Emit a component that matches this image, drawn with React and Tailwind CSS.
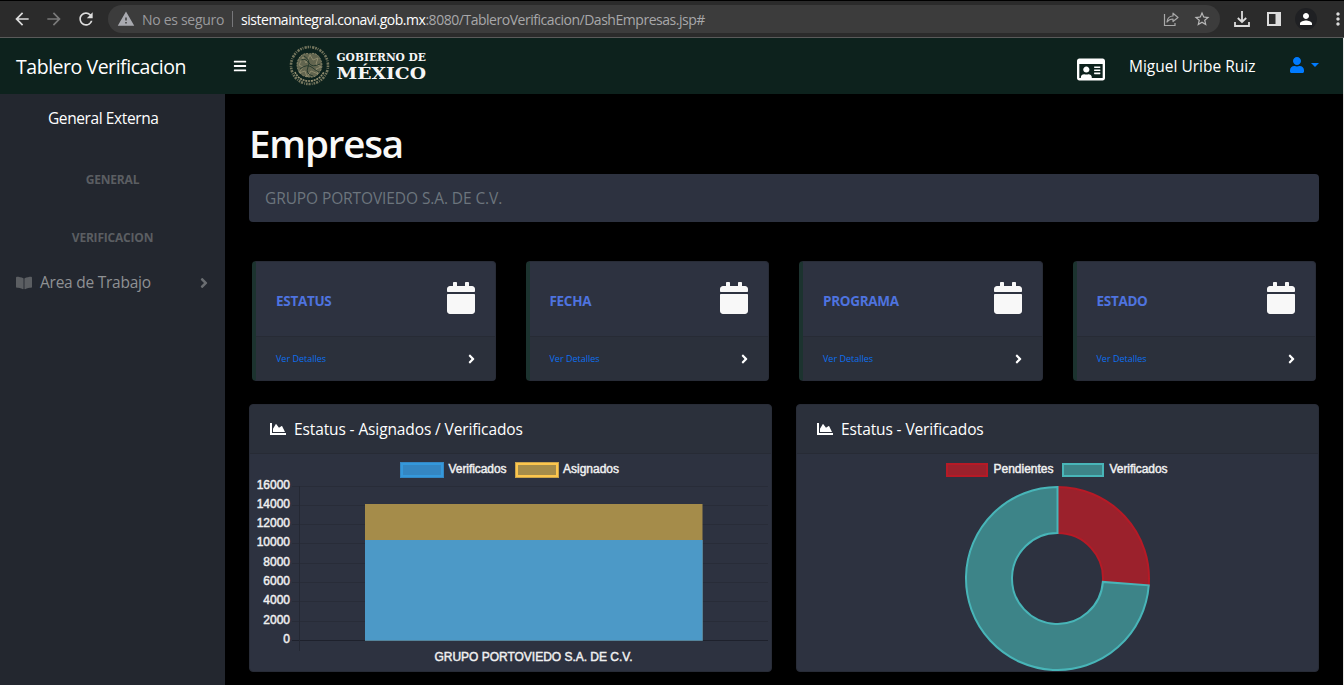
import { FaBars, FaRegIdCard, FaUser, FaBookOpen, FaAngleRight, FaCalendar, FaChartArea } from "react-icons/fa";
import { MdArrowBack, MdArrowForward, MdRefresh, MdWarning, MdStarBorder, MdPerson, MdMoreVert } from "react-icons/md";

function BrowserBar() {
  return (
    <div className="flex h-[38px] shrink-0 items-center border-t border-b border-t-black border-b-[#5a5a5a] bg-[#2b2b2b] text-[#dcdcdc]">
      <div className="flex w-[108px] items-center pl-[12px]">
        <MdArrowBack className="size-[20px]" />
        <MdArrowForward className="ml-[12px] size-[20px] text-[#7a7a7a]" />
        <MdRefresh className="ml-[12px] size-[20px]" />
      </div>
      <div className="flex h-[28px] w-[1112px] items-center rounded-full bg-[#3c3c3c] pr-[9px] pl-[9px] text-[14px]">
        <MdWarning className="size-[18px] text-[#a9aab0]" />
        <span className="ml-[7px] w-[83px] whitespace-nowrap tracking-[-0.3px] text-[#9a9a9c]">No es seguro</span>
        <span className="ml-[7px] h-[16px] w-px bg-[#77777a]" />
        <span className="ml-[8px] whitespace-nowrap tracking-[-0.47px] text-[#a8a8aa]">
          <span className="text-white">sistemaintegral.conavi.gob.mx</span>:8080/TableroVerificacion/DashEmpresas.jsp#
        </span>
        <svg className="ml-auto size-[16px]" viewBox="0 0 16 16" fill="none" stroke="#a9a9a9" strokeWidth="1.2">
          <path d="M1.5 3V14.5H12V12" />
          <path d="M4 11C4.500 7 7 5 10 5V2.200L15 6.500L10 10.500V8C7.500 8 5.500 9 4 11Z" strokeLinejoin="round" />
        </svg>
        <MdStarBorder className="ml-[14px] size-[18px] text-[#b9b9b9]" />
      </div>
      <svg className="ml-[14px] size-[16px]" viewBox="0 0 16 16" fill="none" stroke="#dcdcdc" strokeWidth="1.8">
        <path d="M8 0V11M3.800 7L8 11L12.200 7M1 11V15H15V11" />
      </svg>
      <svg className="ml-[17px] size-[14px]" viewBox="0 0 14 14">
        <path d="M0 0H14V14H0ZM2 2V12H8.500V2Z" fill="#dcdcdc" fillRule="evenodd" />
      </svg>
      <span className="ml-[14px] flex size-[22px] items-center justify-center rounded-full bg-[#1f2023] text-white">
        <MdPerson className="size-[18px]" />
      </span>
      <MdMoreVert className="ml-[11px] -mr-[6px] size-[20px] shrink-0" />
    </div>
  );
}

function Emblem() {
  return (
    <svg className="h-[42px] w-[146px] overflow-visible" viewBox="0 0 146 42">
      <g fill="none" stroke="#989374">
        <circle cx="20.500" cy="20.500" r="18.500" strokeWidth="2.600" strokeDasharray="1.6 1 0.8 1.200 2.200 0.9" opacity="0.75" />
        <path d="M8 19C9 11 15 7 21 9C27 6 33 13 33 21C32 28 27 33 20 32C13 32 8 27 8 19Z" fill="#62654f" strokeWidth="0.8" strokeDasharray="2 1" />
        <path d="M10 20L14 12L17 18L21 10L24 15L29 13L27 19L32 22L27 24L29 29L22 26L18 32L16 26L10 28L14 22Z" strokeWidth="0.8" />
        <path d="M12 15Q17 13 20 18T31 19M11 24Q18 18 24 23T31 27M15 11Q22 15 19 22T24 31" stroke="#283a2d" strokeWidth="1" />
        <path d="M6 27Q10 36 20 36T35 27" strokeWidth="1.600" strokeDasharray="2 0.8" />
      </g>
      <g fill="#f5f5f5" className="font-['DejaVu_Serif'] font-bold">
        <text x="47.500" y="15.500" fontSize="11" textLength="89.500" lengthAdjust="spacingAndGlyphs">GOBIERNO DE</text>
        <text x="47.500" y="33.500" fontSize="17.500" textLength="89.500" lengthAdjust="spacingAndGlyphs">MÉXICO</text>
      </g>
    </svg>
  );
}

function NavBar() {
  return (
    <header className="flex h-[56px] shrink-0 items-center bg-[#0d221d] text-white">
      <div className="w-[233px] pt-[2px] pl-[16px] text-[19.500px] tracking-[-0.46px] whitespace-nowrap">Tablero Verificacion</div>
      <FaBars className="size-[14px]" />
      <div className="ml-[42px]"><Emblem /></div>
      <FaRegIdCard className="ml-auto h-[25px] w-[28px] translate-y-[3px]" />
      <span className="ml-[24px] w-[126px] pt-[2px] text-[15.500px] whitespace-nowrap">Miguel Uribe Ruiz</span>
      <span className="mr-[24px] ml-[35px] flex items-center text-[#007bff]">
        <FaUser className="mb-[2px] h-[16px] w-[14px]" />
        <span className="mb-[3px] ml-[7px] h-0 w-0 border-x-[4px] border-t-[4px] border-x-transparent border-t-[#007bff]" />
      </span>
    </header>
  );
}

function Sidebar() {
  return (
    <aside className="flex w-[225px] shrink-0 flex-col bg-[#23272f]">
      <div className="flex h-[48px] items-center pt-[2px] pl-[48px] text-[15.500px] tracking-[-0.4px] text-white">General Externa</div>
      <div className="mt-[28px] flex h-[20px] items-center justify-center text-[12px] font-bold tracking-[-0.2px] text-[#5b5e62]">GENERAL</div>
      <div className="mt-[38px] flex h-[20px] items-center justify-center text-[12px] font-bold tracking-[-0.2px] text-[#5b5e62]">VERIFICACION</div>
      <div className="mt-[22px] flex h-[26px] items-center pr-[13px] pl-[16px] text-[15.500px] tracking-[-0.25px] text-[#8f9194]">
        <FaBookOpen className="mr-[8px] mb-[1px] h-[16px] w-[16px] text-[#5b5e62]" />
        Area de Trabajo
        <FaAngleRight className="ml-auto size-[16px] text-[#6a6d71]" />
      </div>
    </aside>
  );
}

function StatCard({ title }) {
  return (
    <div className="flex h-[120px] flex-col rounded-[4px] border border-l-4 border-[#282c37] border-l-[#1c332f] bg-[#2d3240]">
      <div className="flex h-[74px] items-center justify-between px-[20px]">
        <span className="pt-[5px] text-[13.500px] font-bold tracking-[-0.3px] text-[#4e73df]">{title}</span>
        <FaCalendar className="mb-[2px] h-[32px] w-[28px] text-[#f8f8f8]" />
      </div>
      <div className="flex h-[44px] items-center justify-between border-t border-[#272b35] bg-[#2b303b] pr-[19px] pl-[20px]">
        <span className="text-[9px] text-[#0d6ff0]">Ver Detalles</span>
        <FaAngleRight className="mt-[1px] h-[14px] w-[9px] text-white" />
      </div>
    </div>
  );
}

function Panel({ title, children }) {
  return (
    <section className="flex h-[268px] w-[523px] flex-col overflow-hidden rounded-[4px] border border-[#282c37] bg-[#2d3240]">
      <div className="flex h-[49px] shrink-0 items-center border-b border-[#272b35] bg-[#2b303b] pl-[20px] text-[15.500px] tracking-[-0.12px] text-white">
        <FaChartArea className="mr-[8px] size-[16px]" />
        <span className="pt-[2px]">{title}</span>
      </div>
      {children}
    </section>
  );
}

function Label({ x, y, w, anchor = "start", children }) {
  return (
    <text x={x} y={y} textLength={w} textAnchor={anchor} fontSize="12" fill="#f0f0f0" stroke="#f0f0f0" strokeWidth="0.45" className="font-['Liberation_Sans']">
      {children}
    </text>
  );
}

const ticks = [
  [16000, 486.5], [14000, 505.5], [12000, 524.5], [10000, 543.5], [8000, 563.5],
  [6000, 582.5], [4000, 601.5], [2000, 621.5], [0, 640.5],
];

function BarChart() {
  return (
    <svg className="h-[217px] w-[521px]" viewBox="250 454 521 217">
      <rect x="400.500" y="462.500" width="43" height="15" fill="#3498db" stroke="#3486c2" />
      <rect x="403" y="465" width="38" height="10" fill="#3486c2" />
      <Label x={448.5} y={473} w={58}>Verificados</Label>
      <rect x="515.500" y="462.500" width="43" height="15" fill="#fcc64d" stroke="#c9a34b" />
      <rect x="518" y="465" width="38" height="10" fill="#a58c4a" />
      <Label x={563} y={473} w={56}>Asignados</Label>
      {ticks.map(([v, y]) => (
        <g key={v}>
          <path d={`M292 ${y}H768`} stroke={v === 0 ? "#1e212c" : "#282c38"} />
          <Label x={290} y={y + 2.9} anchor="end">{v}</Label>
        </g>
      ))}
      <path d="M299.500 486V651" stroke="#242833" />
      <rect x="365" y="504" width="337.500" height="36" fill="#a58c4a" />
      <rect x="365" y="540" width="337.500" height="100.600" fill="#4c99c7" />
      <path d="M365 640.500H702.500V540" fill="none" stroke="#5c8ba0" strokeWidth="0.8" />
      <Label x={434.500} y={661} w={198}>GRUPO PORTOVIEDO S.A. DE C.V.</Label>
    </svg>
  );
}

function arc(cx, cy, r1, r2, a, b) {
  const p = (r, t) => `${cx + r * Math.sin(t)} ${cy - r * Math.cos(t)}`;
  const large = b - a > Math.PI ? 1 : 0;
  return `M${p(r1, a)}A${r1} ${r1} 0 ${large} 1 ${p(r1, b)}L${p(r2, b)}A${r2} ${r2} 0 ${large} 0 ${p(r2, a)}Z`;
}

function DonutChart() {
  const split = (94.3 * Math.PI) / 180;
  return (
    <svg className="h-[217px] w-[521px]" viewBox="797 454 521 217">
      <rect x="947" y="464" width="40" height="12" fill="#9b212c" stroke="#b61a26" strokeWidth="2" />
      <Label x={993.500} y={473} w={60}>Pendientes</Label>
      <rect x="1063" y="464" width="40" height="12" fill="#3d8488" stroke="#48b5b8" strokeWidth="2" />
      <Label x={1109.500} y={473} w={58}>Verificados</Label>
      <path d={arc(1057.5, 578.5, 91.5, 45.5, 0, split)} fill="#9b212c" stroke="#b61a26" strokeWidth="2" />
      <path d={arc(1057.5, 578.5, 91.5, 45.5, split, Math.PI * 2)} fill="#3d8488" stroke="#48b5b8" strokeWidth="2" />
    </svg>
  );
}

export default function App() {
  return (
    <div className="flex h-[685px] w-[1344px] flex-col overflow-hidden bg-black font-['Open_Sans',sans-serif]">
      <BrowserBar />
      <div className="flex min-h-0 flex-1 flex-col border-r border-[#e8e8e8]">
        <NavBar />
        <div className="flex min-h-0 flex-1">
          <Sidebar />
          <main className="flex flex-1 flex-col px-[24px]">
            <h1 className="mt-[23px] h-[57px] text-[38.500px] leading-[52px] font-semibold tracking-[-1.15px] text-[#f8f8f8]">Empresa</h1>
            <div className="flex h-[48px] shrink-0 items-center rounded-[4px] bg-[#2d3240] pt-[2px] pl-[16px] text-[15.500px] tracking-[-0.1px] text-[#6c757d]">
              GRUPO PORTOVIEDO S.A. DE C.V.
            </div>
            <div className="mt-[39px] grid grid-cols-4 gap-[30px] px-[3px]">
              {["ESTATUS", "FECHA", "PROGRAMA", "ESTADO"].map((t) => <StatCard key={t} title={t} />)}
            </div>
            <div className="mt-[23px] flex justify-between">
              <Panel title="Estatus - Asignados / Verificados"><BarChart /></Panel>
              <Panel title="Estatus - Verificados"><DonutChart /></Panel>
            </div>
          </main>
        </div>
      </div>
    </div>
  );
}
